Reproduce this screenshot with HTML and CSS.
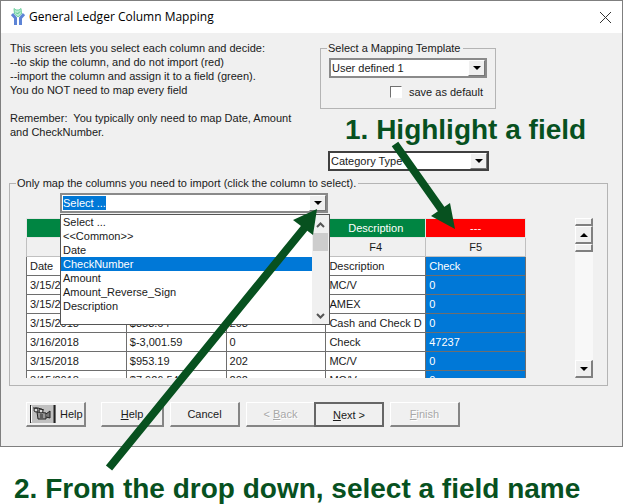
FILE: index.html
```html
<!DOCTYPE html>
<html lang="en">
<head>
    <meta charset="UTF-8">
    <meta name="viewport" content="width=device-width, initial-scale=1.0">
    <title>General Ledger Column Mapping</title>
    <link rel="stylesheet" href="styles.css">
</head>
<body>

<div class="dialog">
    <!-- Title bar -->
    <header class="title-bar">
        <svg class="app-icon" width="14" height="18" viewBox="0 0 14 18">
            <path d="M3 0.5 L5 2 H8 L10 0.5 L10.5 6 L7 9 L3.5 6 Z" fill="#b5ecd0" stroke="#6fd0a0"/>
            <path d="M5 4.5 L6.5 6 L9 3.5" fill="none" stroke="#4fbf8a"/>
            <path d="M1 6 L4.5 10 V17 M13 6 L9.5 10 V17" fill="none" stroke="#5d84d6" stroke-width="3"/>
        </svg>
        <h1>General Ledger Column Mapping</h1>
        <button class="close-btn" aria-label="Close">
            <svg width="11" height="11" viewBox="0 0 11 11"><path d="M0 0 L11 11 M11 0 L0 11" stroke="#333" fill="none"/></svg>
        </button>
    </header>

    <main class="content">
        <div class="top">
            <div class="intro">
                <p>This screen lets you select each column and decide:<br>
                --to skip the column, and do not import (red)<br>
                --import the column and assign it to a field (green).<br>
                You do NOT need to map every field</p>
                <p>Remember:&nbsp; You typically only need to map Date, Amount<br>
                and CheckNumber.</p>
            </div>
            <div class="options">
                <fieldset class="template">
                    <legend>Select a Mapping Template</legend>
                    <div class="combo">
                        <select aria-label="Mapping template"><option>User defined 1</option></select>
                        <span class="combo-arrow"></span>
                    </div>
                    <label class="save-default"><input type="checkbox"> save as default</label>
                </fieldset>
                <div class="combo combo-dark">
                    <select aria-label="Category type"><option>Category Type</option></select>
                    <span class="combo-arrow"></span>
                </div>
            </div>
        </div>

        <!-- Column mapping -->
        <fieldset class="mapping">
            <legend>Only map the columns you need to import (click the column to select).</legend>
            <div class="field-picker">
                <div class="combo">
                    <input type="text" id="fieldInput" value="Select ..." role="combobox" aria-label="Field" aria-expanded="true" aria-controls="fieldList">
                    <button class="combo-arrow" aria-label="Show fields"></button>
                </div>
                <div class="popup">
                    <ul id="fieldList" role="listbox" aria-label="Fields">
                        <li role="option">Select ...</li>
                        <li role="option">&lt;&lt;Common&gt;&gt;</li>
                        <li role="option">Date</li>
                        <li role="option" class="active" aria-selected="true">CheckNumber</li>
                        <li role="option">Amount</li>
                        <li role="option">Amount_Reverse_Sign</li>
                        <li role="option">Description</li>
                    </ul>
                    <div class="popup-scroll">
                        <svg width="9" height="6" viewBox="0 0 9 6"><path d="M1 5 L4.5 1.5 L8 5" fill="none" stroke="#555" stroke-width="2"/></svg>
                        <span class="popup-thumb"></span>
                        <svg width="9" height="6" viewBox="0 0 9 6"><path d="M1 1 L4.5 4.5 L8 1" fill="none" stroke="#555" stroke-width="2"/></svg>
                    </div>
                </div>
            </div>
            <div class="grid-area">
                <div class="grid-wrap">
                    <table>
                        <thead>
                            <tr class="mapped"><th></th><th></th><th></th><th>Description</th><th class="skip">---</th></tr>
                            <tr class="names"><th></th><th></th><th></th><th>F4</th><th>F5</th></tr>
                        </thead>
                        <tbody>
                            <tr><td>Date</td><td></td><td></td><td>Description</td><td>Check</td></tr>
                            <tr><td>3/15/2018</td><td></td><td></td><td>MC/V</td><td>0</td></tr>
                            <tr><td>3/15/2018</td><td></td><td></td><td>AMEX</td><td>0</td></tr>
                            <tr><td>3/15/2018</td><td>$353.64</td><td>203</td><td>Cash and Check D</td><td>0</td></tr>
                            <tr><td>3/16/2018</td><td>$-3,001.59</td><td>0</td><td>Check</td><td>47237</td></tr>
                            <tr><td>3/15/2018</td><td>$953.19</td><td>202</td><td>MC/V</td><td>0</td></tr>
                            <tr><td>3/15/2018</td><td>$7,926.54</td><td>202</td><td>MC/V</td><td>0</td></tr>
                        </tbody>
                    </table>
                </div>
                <div class="scrollbar">
                    <span class="thumb"></span>
                    <button class="up" aria-label="Scroll up"></button>
                    <span class="thumb"></span>
                    <button class="down" aria-label="Scroll down"></button>
                </div>
            </div>
        </fieldset>

        <div class="buttons">
            <button class="btn video-help">
                <svg width="26" height="18" viewBox="0 0 26 18">
                    <rect width="26" height="18" fill="#c0c0c0"/>
                    <path d="M1.5 1 V17" stroke="#fff"/>
                    <path d="M0.5 0 V18" stroke="#222"/>
                    <path d="M24.5 0 V18" stroke="#222" stroke-width="2"/>
                    <path d="M7 7 L16 8 V14 H8 Z" fill="#999" stroke="#222"/>
                    <path d="M16 9 L20 6 V13 L16 12" fill="#777" stroke="#222"/>
                    <circle cx="6" cy="5" r="2" fill="#ddd" stroke="#222"/>
                    <circle cx="11" cy="6" r="2" fill="#ddd" stroke="#222"/>
                    <path d="M3 3 L8 3 L14 5 M10 10 H13 M10 12 H13" fill="none" stroke="#222"/>
                </svg>
                Help
            </button>
            <button class="btn help"><u>H</u>elp</button>
            <button class="btn cancel">Cancel</button>
            <button class="btn back" disabled>&lt; <u>B</u>ack</button>
            <button class="btn next"><u>N</u>ext &gt;</button>
            <button class="btn finish" disabled><u>F</u>inish</button>
        </div>
    </main>
</div>

<p class="note">2. From the drop down, select a field name</p>
<p class="note note-over">1. Highlight a field</p>

<!-- Arrows drawn over the dialog -->
<svg class="arrows" width="623" height="504" viewBox="0 0 623 504">
    <path d="M395 144 L446 216 M109 468 L306 226" stroke="#07511f" stroke-width="8" fill="none"/>
    <path d="M455 229 L431 216 L450 203 Z M317 209 L293 220 L313 235 Z" fill="#07511f"/>
</svg>

<script>
    // Open with the whole entry selected, ready to be typed over
    const fieldInput = document.getElementById('fieldInput');
    fieldInput.focus();
    fieldInput.select();
</script>

</body>
</html>
```
FILE: styles.css
```css
* {
    box-sizing: border-box;
}
body {
    position: relative;
    margin: 0;
    background-color: white;
    color: #1a1a1a;
    font-family: "Liberation Sans", Arial, sans-serif;
    font-size: 11px;
    line-height: 14px;
}
button, input, select {
    font: inherit;
    color: inherit;
    margin: 0;
}
.dialog {
    background-color: #f0f0f0;
    border: 1px solid #7f7f7f;
}
.title-bar {
    display: flex;
    align-items: center;
    height: 32px;
    padding: 0 11px 0 10px;
    background-color: white;
}
.title-bar h1 {
    flex: 1;
    margin: 0 0 0 4px;
    color: #000;
    font-family: "Open Sans", sans-serif;
    font-size: 12px;
    font-weight: normal;
}
.close-btn {
    display: flex;
    padding: 0;
    border: none;
    background: none;
}
.content {
    padding: 8px 14px 19px 8px;
}
.top {
    display: grid;
    grid-template-columns: 311px 176px;
}
.intro p {
    margin: 0 0 14px 1px;
}
fieldset {
    margin: 0;
    min-width: 0;
    border: 1px solid #b4b4b4;
}
legend {
    padding: 0 2px 0 1px;
}
.template {
    height: 68px;
    padding: 3px 8px 0 8px;
}
.template legend {
    margin-left: -2px;
}
.save-default {
    display: flex;
    align-items: center;
    justify-content: flex-end;
    gap: 7px;
    margin: 7px 4px 0 0;
}
.save-default input {
    appearance: none;
    width: 12px;
    height: 12px;
    border: 1px solid #fff;
    border-top-color: #707070;
    border-left-color: #707070;
    background-color: white;
}
.combo {
    display: flex;
    height: 20px;
    border: 2px solid #8a8a8a;
    background-color: white;
}
.combo-dark {
    margin: 42px 7px 0 8px;
    border-color: #404040;
}
.combo select,
.combo input {
    appearance: none;
    flex: 1;
    min-width: 0;
    padding: 0 1px;
    border: none;
    outline: none;
    background-color: white;
}
.combo input::selection {
    background-color: #0078d7;
    color: white;
}
.combo-arrow {
    display: flex;
    align-items: center;
    justify-content: center;
    width: 17px;
    padding: 0;
    border: 1px solid #fff;
    border-right-color: #777;
    border-bottom-color: #777;
    background-color: #f0f0f0;
}
.combo-arrow::after,
.up::after,
.down::after {
    content: "";
    border: 4px solid transparent;
    border-top-color: #000;
    border-bottom-width: 0;
}
.mapping {
    margin-top: 5px;
    height: 210px;
    padding: 3px 14px 0 16px;
}
.mapping legend {
    margin-left: -10px;
}
.field-picker {
    position: relative;
    width: 268px;
    margin-left: 34px;
}
.popup {
    position: absolute;
    top: 21px;
    left: 0;
    z-index: 1;
    display: flex;
    width: 270px;
    height: 111px;
    border: 1px solid #555;
    background-color: white;
}
.popup ul {
    flex: 1;
    margin: 0;
    padding: 0;
    list-style: none;
}
.popup li {
    padding-left: 2px;
}
.popup li.active {
    background-color: #0078d7;
    color: white;
}
.popup-scroll {
    display: flex;
    flex-direction: column;
    align-items: center;
    width: 17px;
    padding: 7px 0 5px;
    background-color: #f0f0f0;
}
.popup-thumb {
    width: 15px;
    height: 18px;
    margin: 5px 0 auto;
    background-color: #cdcdcd;
}
.grid-area {
    display: flex;
    margin-top: 5px;
}
.grid-wrap {
    flex: 1;
    height: 160px;
    margin-right: 49px;
    overflow: hidden;
}
table {
    width: 100%;
    table-layout: fixed;
    border-collapse: collapse;
}
th, td {
    height: 19px;
    padding: 0 0 0 3px;
    border: 1px solid #6e6e6e;
    background-color: white;
    text-align: left;
    font-weight: normal;
    white-space: nowrap;
    overflow: hidden;
}
th {
    padding: 0;
    border-color: #c0c0c0;
    text-align: center;
}
.mapped th {
    border-color: #e4e4e4;
    background-color: #008542;
    color: white;
}
.mapped th.skip {
    background-color: #f00;
}
.names th {
    background-color: #f0f0f0;
}
td:last-child {
    background-color: #0078d7;
    color: white;
}
.scrollbar {
    display: flex;
    flex-direction: column;
    width: 18px;
    height: 160px;
    background-color: #f8f8f8;
}
.thumb,
.up,
.down {
    border: 1px solid #fff;
    border-right: 2px solid #808080;
    border-bottom: 2px solid #808080;
    background-color: #f0f0f0;
}
.thumb {
    height: 8px;
}
.up,
.down {
    display: flex;
    align-items: center;
    justify-content: center;
    height: 18px;
    padding: 0;
}
.up::after {
    border: 4px solid transparent;
    border-bottom-color: #000;
    border-top-width: 0;
}
.down {
    margin-top: auto;
}
.buttons {
    display: flex;
    gap: 6px;
    margin: 16px 0 0 17px;
}
.btn {
    width: 70px;
    height: 25px;
    padding: 0;
    border: 1px solid #fff;
    border-right: 2px solid #858585;
    border-bottom: 2px solid #858585;
    background-color: #f0f0f0;
}
.btn:disabled {
    color: #a8a8a8;
    text-shadow: 1px 1px #fff;
}
.video-help {
    display: flex;
    align-items: center;
    gap: 4px;
    width: 60px;
    padding-left: 3px;
    margin-right: 9px;
}
.help {
    width: 63px;
}
.next {
    margin-left: -8px;
    border: 2px solid #666;
}
.note {
    margin: 27px 0 0 14px;
    color: #07511f;
    font-size: 28px;
    font-weight: bold;
    line-height: 30px;
    white-space: nowrap;
}
.note-over {
    position: absolute;
    top: 115px;
    left: 345px;
    margin: 0;
}
.arrows {
    position: absolute;
    top: 0;
    left: 0;
    z-index: 2;
    pointer-events: none;
}
```
